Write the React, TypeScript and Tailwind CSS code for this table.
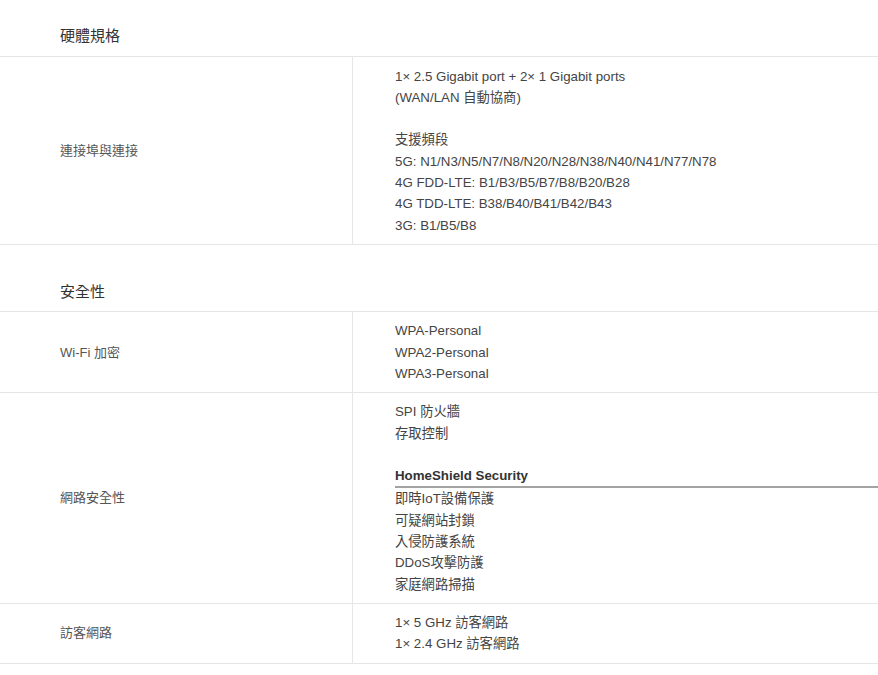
const font = "font-['Liberation_Sans','Noto_Sans_CJK_TC',sans-serif]";

type Row = { label: string; lines: React.ReactNode[] };

function SectionTitle({ title, first }: { title: string; first?: boolean }) {
  return (
    <div
      className={`${first ? "pt-[25px] pb-[9px]" : "pt-[36px] pb-[8px]"} pl-[60px] text-[15px] leading-[22px] text-[#333]`}
    >
      {title}
    </div>
  );
}

function SpecRow({ row, loose }: { row: Row; loose?: boolean }) {
  return (
    <div className="flex border-b border-[#e6e6e6]">
      <div className="w-[352px] shrink-0 flex items-center pl-[60px] text-[13px] text-[#555]">
        {row.label}
      </div>
      <div
        className={`flex-1 border-l border-[#e6e6e6] pl-[42px] ${loose ? "py-[8.5px]" : "py-[8px]"} text-[13.3px] leading-[21.3px] text-[#444]`}
      >
        {row.lines.map((l, i) => (
          <div key={i}>{l === "" ? "\u00a0" : l}</div>
        ))}
      </div>
    </div>
  );
}

const hardware: Row[] = [
  {
    label: "連接埠與連接",
    lines: [
      "1× 2.5 Gigabit port + 2× 1 Gigabit ports",
      "(WAN/LAN 自動協商)",
      "",
      "支援頻段",
      "5G: N1/N3/N5/N7/N8/N20/N28/N38/N40/N41/N77/N78",
      "4G FDD-LTE: B1/B3/B5/B7/B8/B20/B28",
      "4G TDD-LTE: B38/B40/B41/B42/B43",
      "3G: B1/B5/B8",
    ],
  },
];

const security: Row[] = [
  {
    label: "Wi-Fi 加密",
    lines: ["WPA-Personal", "WPA2-Personal", "WPA3-Personal"],
  },
  {
    label: "網路安全性",
    lines: [
      "SPI 防火牆",
      "存取控制",
      "",
      <div className="font-bold text-[#333] border-b-2 border-[#a3a3a3]">HomeShield Security</div>,
      "即時IoT設備保護",
      "可疑網站封鎖",
      "入侵防護系統",
      "DDoS攻擊防護",
      "家庭網路掃描",
    ],
  },
  {
    label: "訪客網路",
    lines: ["1× 5 GHz 訪客網路", "1× 2.4 GHz 訪客網路"],
  },
];

export default function App() {
  return (
    <div className={`${font} w-[878px] min-h-[675px] bg-white`}>
      <SectionTitle title="硬體規格" first />
      <div className="border-t border-[#e6e6e6]">
        {hardware.map((r) => (
          <SpecRow key={r.label} row={r} loose />
        ))}
      </div>
      <SectionTitle title="安全性" />
      <div className="border-t border-[#e6e6e6]">
        {security.map((r) => (
          <SpecRow key={r.label} row={r} />
        ))}
      </div>
    </div>
  );
}
